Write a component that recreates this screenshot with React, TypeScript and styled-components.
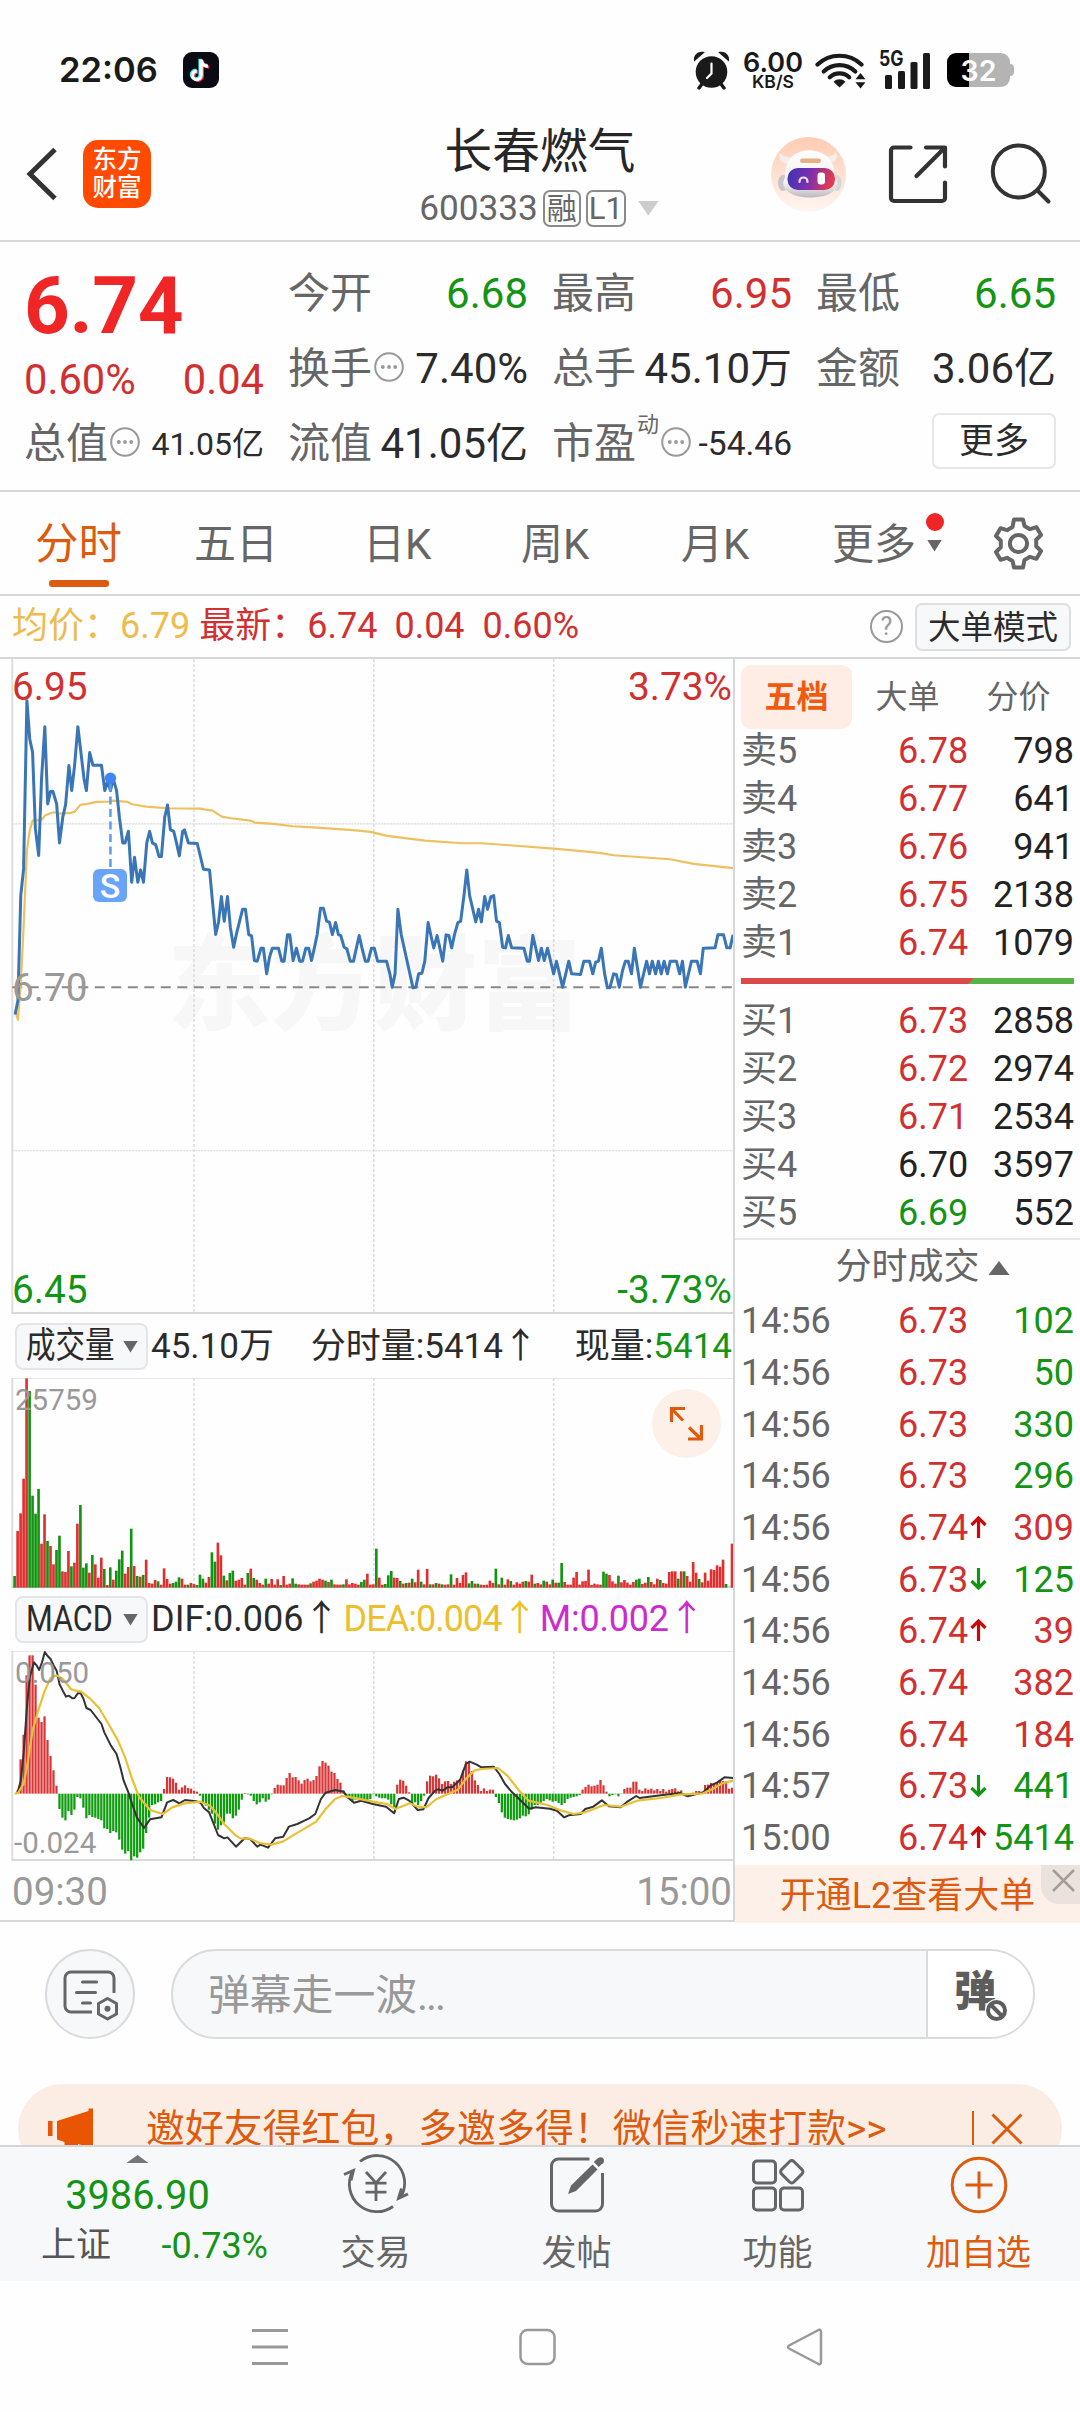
import React from "react";
import styled, { createGlobalStyle } from "styled-components";

const C = {
  red: "#d23030",
  green: "#149414",
  dark: "#2b2b2b",
  grey: "#666",
  pale: "#999",
  orange: "#dd5b0f",
  gold: "#edbb4e",
  line: "#d6d7d9",
  panel: "#f7f8fa",
};

const Global = createGlobalStyle`
  * { box-sizing: border-box; }
  body { margin: 0; background: #fff; }
  svg { display: block; flex: none; }
`;

const Screen = styled.main`
  width: 1080px;
  height: 2412px;
  display: flex;
  flex-direction: column;
  overflow: hidden;
  background: #fefefe;
  color: ${C.dark};
  font-family: Roboto, "Noto Sans CJK SC", sans-serif;
  line-height: 1.2;
  white-space: nowrap;
  & > * { flex-shrink: 0; }
`;

/* ---------- status bar ---------- */

const StatusBar = styled.div`
  height: 120px;
  padding: 0 67px 0 59px;
  display: flex;
  align-items: center;
  justify-content: space-between;
  font-family: Inter, Roboto, sans-serif;
  font-weight: 600;
  color: #1a1a1a;
`;
const StatusSide = styled.div`
  display: flex;
  align-items: center;
  padding-top: 20px;
`;
const Clock = styled.span`
  font-size: 34.5px;
  line-height: 36px;
  margin-right: 25px;
`;
const NetSpeed = styled.div`
  width: 62px;
  margin: 0 11px 0 11px;
  display: flex;
  flex-direction: column;
  align-items: center;
`;
const SpeedValue = styled.span`
  font-size: 27px;
  line-height: 23px;
`;
const SpeedUnit = styled.span`
  font-size: 17.5px;
  line-height: 16px;
`;
const Signal = styled.div`
  width: 54px;
  height: 38px;
  margin-left: 12px;
  position: relative;
`;
const SignalKind = styled.span`
  position: absolute;
  left: 0;
  top: -2px;
  font-size: 21px;
  font-weight: 700;
  line-height: 20px;
  transform: scaleX(0.84);
  transform-origin: left;
`;
const Battery = styled.div`
  width: 63px;
  height: 34px;
  margin: 0 3px 0 14px;
  position: relative;
  border-radius: 9px;
  background: linear-gradient(to right, #000 22px, #b4b4b4 22px);
  color: #fff;
  font-size: 28.5px;
  line-height: 35px;
  text-align: center;
  &::after {
    content: "";
    position: absolute;
    left: 63px;
    top: 11px;
    width: 4px;
    height: 12px;
    border-radius: 0 4px 4px 0;
    background: #b4b4b4;
  }
`;

/* ---------- title bar ---------- */

const Header = styled.header`
  height: 122px;
  display: grid;
  grid-template-columns: 1fr 260px 1fr;
  border-bottom: 2px solid ${C.line};
`;
const HeaderSide = styled.div<{ $end?: boolean }>`
  display: flex;
  align-items: center;
  justify-content: ${(p) => (p.$end ? "flex-end" : "flex-start")};
  padding: ${(p) => (p.$end ? "0 28px 12px 0" : "0 0 13px 24px")};
  gap: ${(p) => (p.$end ? "42px" : "23px")};
`;
const AppLogo = styled.div`
  width: 68px;
  height: 68px;
  border-radius: 15px;
  background: #ff4a00;
  color: #fff;
  font-weight: 500;
  font-size: 24.5px;
  line-height: 28px;
  padding-top: 6px;
  text-align: center;
`;
const HeaderTitle = styled.div`
  display: flex;
  flex-direction: column;
  align-items: center;
`;
const StockName = styled.div`
  font-size: 47.7px;
  line-height: 64px;
  color: #262626;
`;
const StockCode = styled.div`
  display: flex;
  align-items: center;
  height: 40px;
  margin-top: 4px;
  margin-left: -2px;
  color: ${C.grey};
  font-size: 35.2px;
`;
const Badge = styled.span<{ $w: number; $size: number }>`
  width: ${(p) => p.$w}px;
  height: 37px;
  margin-left: 5px;
  border: 2px solid #8a8a8a;
  border-radius: 7px;
  font-size: ${(p) => p.$size}px;
  line-height: 34px;
  display: flex;
  justify-content: center;
`;
const Caret = styled.i<{ $w: number; $h: number; $color: string; $up?: boolean; $ml?: number }>`
  display: block;
  flex: none;
  width: ${(p) => p.$w}px;
  height: ${(p) => p.$h}px;
  margin-left: ${(p) => p.$ml ?? 0}px;
  background: ${(p) => p.$color};
  clip-path: ${(p) => (p.$up ? "polygon(50% 0, 100% 100%, 0 100%)" : "polygon(0 0, 100% 0, 50% 100%)")};
`;

/* ---------- quote summary ---------- */

const Quote = styled.section`
  height: 250px;
  padding: 14px 24px 0 24px;
  display: grid;
  grid-template-columns: repeat(4, 240px);
  column-gap: 24px;
  grid-template-rows: repeat(3, 75px);
  border-bottom: 2px solid ${C.line};
`;
const QuoteCell = styled.div`
  display: flex;
  align-items: center;
  height: 75px;
  min-width: 0;
`;
const BigPrice = styled.div`
  font-size: 80px;
  line-height: 98px;
  margin-top: 24px;
  font-weight: 700;
  letter-spacing: -0.4px;
  color: #f02626;
`;
const Change = styled.div`
  display: flex;
  justify-content: space-between;
  align-items: center;
  padding-top: 23px;
  color: ${C.red};
  font-size: 41.7px;
`;
const Label = styled.span`
  color: ${C.grey};
  font-size: 42px;
  line-height: 50px;
`;
const Value = styled.span<{ $color?: string; $size?: number }>`
  margin-left: auto;
  color: ${(p) => p.$color ?? C.dark};
  font-size: ${(p) => p.$size ?? 42}px;
  line-height: 50px;
`;
const Sup = styled.sup`
  align-self: flex-start;
  padding-top: 7px;
  margin-left: 1px;
  font-size: 22px;
  line-height: 24px;
  color: ${C.grey};
  vertical-align: baseline;
`;
const MoreButton = styled.button`
  margin-left: auto;
  width: 124px;
  height: 56px;
  margin-top: -5px;
  border: 2px solid #e6e7e9;
  border-radius: 7px;
  background: #fff;
  color: ${C.dark};
  font: 35px/51px Roboto, "Noto Sans CJK SC", sans-serif;
  padding: 0;
`;

/* ---------- period tabs ---------- */

const Tabs = styled.nav`
  height: 104px;
  padding-left: 35px;
  display: grid;
  grid-template-columns: 159px 169px 158px 160px 151px 160px auto;
  align-items: center;
  justify-items: start;
  border-bottom: 2px solid ${C.line};
`;
const Tab = styled.div<{ $active?: boolean }>`
  position: relative;
  display: flex;
  align-items: center;
  height: 102px;
  font-size: ${(p) => (p.$active ? 43.5 : 42)}px;
  color: ${(p) => (p.$active ? C.orange : C.grey)};
  padding-top: 5px;
  &::after {
    content: "";
    display: ${(p) => (p.$active ? "block" : "none")};
    position: absolute;
    left: 14px;
    bottom: 7px;
    width: 60px;
    height: 7px;
    border-radius: 3px;
    background: ${C.orange};
  }
`;
const RedDot = styled.i`
  position: absolute;
  right: -2px;
  top: 21px;
  width: 18px;
  height: 18px;
  border-radius: 50%;
  background: #f02626;
`;

/* ---------- info line ---------- */

const InfoLine = styled.div`
  height: 63px;
  padding: 0 9px 0 12px;
  display: flex;
  align-items: center;
  border-bottom: 2px solid ${C.line};
  font-size: 36px;
`;
const InfoText = styled.span<{ $color: string; $ml?: number }>`
  color: ${(p) => p.$color};
  margin-left: ${(p) => p.$ml ?? 0}px;
`;
const HelpMark = styled.span`
  width: 33px;
  height: 33px;
  margin-left: auto;
  border: 2px solid ${C.pale};
  border-radius: 50%;
  color: ${C.pale};
  font-size: 25px;
  line-height: 29px;
  text-align: center;
`;
const ModeButton = styled.div`
  width: 156px;
  height: 48px;
  margin-left: 12px;
  border: 2px solid #dcdee2;
  border-radius: 7px;
  background: ${C.panel};
  color: ${C.dark};
  font-size: 32.5px;
  line-height: 46px;
  text-align: center;
`;

/* ---------- chart column ---------- */

const Market = styled.section`
  height: 1263px;
  display: flex;
  border-bottom: 2px solid ${C.line};
`;
const ChartColumn = styled.div`
  width: 735px;
  border-right: 2px solid ${C.line};
`;
const Plot = styled.div<{ $h: number }>`
  position: relative;
  height: ${(p) => p.$h}px;
`;
const PlotLabel = styled.span<{ $top: number; $left?: number; $right?: number; $color?: string; $size?: number }>`
  position: absolute;
  top: ${(p) => p.$top - 20}px;
  ${(p) => (p.$right !== undefined ? `right: ${p.$right}px;` : `left: ${p.$left ?? 12}px;`)}
  color: ${(p) => p.$color ?? C.pale};
  font-size: ${(p) => p.$size ?? 38.8}px;
  line-height: 40px;
`;
const Watermark = styled.div`
  position: absolute;
  left: 167px;
  top: 268px;
  font-size: 103.500px;
  line-height: 120px;
  font-weight: 900;
  color: #f7f7f7;
`;
const SellMark = styled.span`
  position: absolute;
  left: 93px;
  top: 210px;
  width: 34px;
  height: 33px;
  border-radius: 6px;
  background: #68a4fa;
  color: #fff;
  font-size: 34px;
  font-weight: 500;
  line-height: 34px;
  text-align: center;
`;
const ExpandButton = styled.div`
  position: absolute;
  left: 652px;
  top: 11px;
  width: 69px;
  height: 69px;
  border-radius: 50%;
  background: #fdf0e8;
`;
const IndicatorRow = styled.div`
  height: 63px;
  padding: 0 1px 0 15px;
  display: flex;
  align-items: center;
  font-size: 35px;
`;
const Picker = styled.div`
  width: 133px;
  height: 47px;
  margin-right: 3px;
  border: 2px solid #e3e5e8;
  border-radius: 8px;
  background: ${C.panel};
  display: flex;
  align-items: center;
  padding-left: 9px;
`;
const PickerName = styled.span<{ $squeeze: number }>`
  width: 88px;
  span {
    display: inline-block;
    font-size: 36px;
    transform: scaleX(${(p) => p.$squeeze});
    transform-origin: left;
  }
`;
const Reading = styled.span<{ $color?: string; $ml?: number; $size?: number; $track?: number }>`
  color: ${(p) => p.$color ?? C.dark};
  margin-left: ${(p) => p.$ml ?? 0}px;
  font-size: ${(p) => p.$size ?? 35}px;
  letter-spacing: ${(p) => p.$track ?? 0}px;
`;
const Push = styled.span`
  margin-left: auto;
`;
const TimeAxis = styled.div`
  height: 60px;
  padding: 2px 1px 0 12px;
  display: flex;
  align-items: center;
  justify-content: space-between;
  color: ${C.pale};
  font-size: 38.5px;
`;

/* ---------- order book ---------- */

const Book = styled.aside`
  flex: 1;
  display: flex;
  flex-direction: column;
  font-size: 36px;
  & > * { flex-shrink: 0; }
`;
const BookTabs = styled.div`
  height: 69px;
  padding: 6px 6px 3px;
  display: grid;
  grid-template-columns: repeat(3, 111px);
`;
const BookTab = styled.div<{ $active?: boolean }>`
  border-radius: 10px;
  background: ${(p) => (p.$active ? "#fdede4" : "transparent")};
  color: ${(p) => (p.$active ? "#f05a10" : C.grey)};
  font-weight: ${(p) => (p.$active ? 700 : 400)};
  font-size: 32px;
  line-height: 64px;
  text-align: center;
`;
const BookRow = styled.div<{ $h: number }>`
  height: ${(p) => p.$h}px;
  padding: 0 6px 0 6px;
  display: grid;
  grid-template-columns: 157px 92px 1fr;
  align-items: center;
`;
const BookCell = styled.span<{ $color: string; $right?: boolean }>`
  display: flex;
  align-items: center;
  justify-content: ${(p) => (p.$right ? "flex-end" : "flex-start")};
  color: ${(p) => p.$color};
`;
const RatioBar = styled.div`
  height: 6px;
  margin: 10px 6px 14px;
  background: #58b347;
  &::before {
    content: "";
    display: block;
    width: 233px;
    height: 6px;
    background: #db4a4a;
    clip-path: polygon(0 0, 100% 0, calc(100% - 6px) 100%, 0 100%);
  }
`;
const TradesTitle = styled.div`
  height: 58px;
  width: 345px;
  border-top: 2px solid #e6e6e8;
  display: flex;
  align-items: center;
  justify-content: center;
  padding-left: 30px;
  color: ${C.grey};
`;
const Promo = styled.div`
  position: relative;
  height: 58px;
  background: #fcf0e9;
  color: ${C.orange};
  line-height: 62px;
  text-align: center;
`;
const PromoClose = styled.div`
  position: absolute;
  right: 0;
  top: 0;
  width: 39px;
  height: 39px;
  border-radius: 0 0 0 18px;
  background: #ece2dc;
`;

/* ---------- comment row and banner ---------- */

const CommentRow = styled.div`
  height: 162px;
  padding: 27px 45px 0;
  display: flex;
  gap: 36px;
`;
const RoundButton = styled.div`
  width: 90px;
  height: 90px;
  border: 2px solid #d9dbde;
  border-radius: 50%;
  background: ${C.panel};
  display: grid;
  place-items: center;
  padding: 3px 0 0 2px;
`;
const CommentBox = styled.div`
  flex: 1;
  height: 90px;
  border: 2px solid #d9dbde;
  border-radius: 45px;
  overflow: hidden;
  background: ${C.panel};
  display: flex;
  color: ${C.pale};
  font-size: 41.8px;
  line-height: 89px;
  padding-left: 35px;
`;
const Dots = styled.span`
  letter-spacing: -2px;
`;
const BarrageToggle = styled.div`
  position: relative;
  width: 107px;
  margin-left: auto;
  border-left: 2px solid #d9dbde;
  background: #fff;
  color: #5d5d5d;
  font-weight: 900;
  font-size: 42px;
  line-height: 82px;
  padding-left: 26px;
`;
const ToggleOff = styled.div`
  position: absolute;
  left: 57px;
  top: 48px;
  border-radius: 50%;
  background: #fff;
`;
const BannerClip = styled.div`
  height: 61px;
  padding: 0 18px;
  overflow: hidden;
`;
const Banner = styled.div`
  height: 90px;
  border-radius: 45px;
  background: #fcede4;
  display: flex;
  align-items: center;
  color: ${C.orange};
  font-size: 38.9px;
  padding: 0 39px 0 30px;
`;
const BannerText = styled.span`
  margin-left: 53px;
  line-height: 46px;
`;
const BannerRule = styled.i`
  width: 2px;
  height: 36px;
  margin: 0 17px 0 auto;
  background: ${C.orange};
`;

/* ---------- bottom bars ---------- */

const BottomBar = styled.footer`
  height: 136px;
  border-top: 2px solid #d3d5d8;
  background: ${C.panel};
  display: grid;
  grid-template-columns: 275px repeat(4, 201px);
`;
const IndexBox = styled.div`
  padding-top: 8px;
  display: flex;
  flex-direction: column;
  align-items: center;
  color: ${C.green};
`;
const IndexValue = styled.div`
  font-size: 39.8px;
  line-height: 48px;
  margin-top: 9px;
`;
const IndexRow = styled.div`
  width: 275px;
  padding: 0 7px 0 41px;
  margin-top: 1px;
  display: flex;
  justify-content: space-between;
  font-size: 36px;
  line-height: 50px;
`;
const IndexName = styled.span`
  font-size: 35px;
  color: #555;
`;
const Action = styled.div<{ $accent?: boolean }>`
  display: flex;
  flex-direction: column;
  align-items: center;
  padding-top: 7px;
  font-size: 35px;
  line-height: 50px;
  color: ${(p) => (p.$accent ? C.orange : C.grey)};
  gap: 13px;
`;
const SystemNav = styled.div`
  flex: 1;
  display: flex;
  align-items: center;
  padding: 0 256px 0 250px;
  justify-content: space-between;
`;

/* ---------- data ---------- */

const PRICE_LINE =
  "32,1067 38,1025 44,710 50,630 57,125 63,240 69,280 75,510 82,590 88,360 95,203 101,435 107,398 112,397 120,435 126,552 133,475 139,437 146,320 152,395 158,320 165,203 171,275 178,360 183,395 190,281 197,319 215,319 222,395 228,365 234,395 240,360 247,395 253,475 260,552 265,552 272,517 279,670 285,595 292,670 298,633 304,670 311,552 317,517 323,552 330,558 337,593 342,593 349,475 355,438 361,513 368,517 374,552 380,591 387,517 391,513 399,552 418,554 425,595 431,631 444,633 450,725 457,827 463,790 469,713 475,787 482,713 488,805 495,865 501,825 514,751 520,751 527,827 533,831 539,905 545,907 553,868 558,868 565,945 571,895 577,868 590,868 597,907 602,907 609,828 614,828 621,905 628,868 635,907 641,907 648,868 654,868 660,905 666,868 672,827 679,748 685,748 692,787 698,790 704,827 711,791 717,827 722,830 729,865 735,870 742,907 749,907 755,868 761,830 767,868 774,907 780,907 787,868 793,868 800,907 819,907 826,945 831,985 837,945 843,751 850,827 875,987 881,985 887,945 894,943 900,907 907,791 913,830 919,867 926,830 932,868 938,907 945,828 951,830 957,867 963,827 970,791 976,787 983,710 989,633 995,710 1008,789 1014,751 1020,789 1027,713 1033,751 1040,713 1046,710 1052,787 1058,791 1065,865 1071,867 1077,830 1084,867 1110,868 1117,907 1122,907 1129,830 1141,905 1147,868 1153,905 1160,868 1173,945 1179,907 1192,985 1205,907 1211,945 1230,947 1237,907 1249,907 1256,945 1262,910 1268,907 1274,868 1281,945 1287,987 1292,987 1300,945 1306,947 1312,985 1319,935 1325,907 1331,907 1338,945 1344,868 1357,985 1370,907 1376,945 1382,907 1389,945 1395,907 1401,945 1407,907 1414,945 1420,907 1433,907 1440,945 1446,907 1452,985 1465,907 1477,907 1484,945 1490,868 1515,867 1521,828 1533,828 1540,867 1547,867 1553,828";
const AVERAGE_LINE =
  "32,1055 38,1083 44,975 50,805 57,575 63,515 69,485 88,483 95,470 107,463 115,460 125,464 150,462 158,459 170,438 185,435 205,429 230,428 240,425 270,429 280,436 310,443 355,448 425,449 435,452 450,455 470,473 490,478 530,485 540,491 580,495 620,502 680,507 760,515 785,519 820,531 900,545 980,553 1020,553 1080,559 1180,570 1270,582 1300,589 1420,601 1470,615 1553,628";
const DIF_LINE =
  "37,426 44,389 50,309 57,169 63,79 72,34 78,44 83,57 89,34 95,3 101,15 107,24 114,44 120,59 126,99 133,119 140,137 146,134 153,142 158,141 165,127 171,127 177,144 183,171 192,177 215,219 221,244 235,284 247,309 255,349 262,389 272,424 280,459 290,499 305,531 318,505 342,499 354,454 367,447 380,457 392,447 415,451 425,455 432,471 443,484 450,509 462,552 475,562 482,559 500,587 518,562 530,564 545,587 552,581 568,590 583,562 600,557 612,527 630,519 645,509 655,502 668,489 680,444 690,425 710,417 728,422 735,437 750,455 765,449 790,459 818,467 835,487 845,444 855,440 867,449 885,477 897,475 908,441 922,419 928,415 938,419 948,409 958,409 975,386 987,339 995,332 1010,341 1020,349 1046,347 1058,369 1070,399 1085,424 1100,444 1121,473 1135,469 1165,473 1180,479 1195,499 1205,493 1230,489 1240,474 1257,467 1275,448 1290,466 1315,469 1330,451 1348,435 1355,441 1400,433 1440,426 1457,436 1490,424 1505,404 1520,394 1535,379 1553,381";
const DEA_LINE =
  "31,428 38,426 50,399 57,349 69,239 82,174 95,119 107,81 120,73 133,84 150,114 160,119 172,122 190,142 210,171 230,219 250,269 265,319 280,384 295,439 318,477 345,489 365,469 390,457 425,452 445,464 460,489 475,519 500,554 510,562 530,563 550,576 575,581 600,571 620,554 670,512 690,474 710,444 725,435 745,439 790,452 820,459 838,474 855,464 868,457 885,467 903,469 925,444 970,416 990,379 1005,359 1020,354 1055,351 1075,374 1100,419 1120,449 1160,462 1190,479 1215,489 1240,484 1280,462 1315,467 1350,449 1400,441 1440,431 1490,427 1510,414 1530,397 1553,389";

/* one entry per trading minute; negative = falling minute */
const VOLUME: number[] = [
  -35, 170, 223, 327, 628, -590, -276, -222, -296, 132, 220, -140, 125, 70, -113, -156, 49, 47, 110, -64,
  75, 192, -248, -60, -73, 45, -98, 70, 30, 90, -56, 8, -61, 24, -51, -85, -111, 42, 62, -177,
  65, -35, 33, -38, 84, 14, 12, 23, -19, 9, 58, 26, 12, -14, -18, -31, 27, 9, -9, 14,
  11, -8, -39, -27, 15, 32, -106, -78, 135, 97, -36, 22, -44, -51, 21, 24, 29, 9, -44, 57,
  -29, 24, 14, 9, -27, 12, 26, 9, 25, -8, 35, 9, 12, -28, -12, 10, 9, 9, 9, -13,
  18, 21, 27, 24, -21, 17, -24, 10, 9, 9, -10, 25, 10, 14, 12, 9, -17, -24, 42, 9,
  10, -117, 30, 9, -11, -37, -50, 30, 29, -20, 12, -14, 15, -27, 16, 54, -18, 10, 56, -10,
  10, -14, 12, -10, 9, 10, -40, 9, 29, 14, 38, 46, -13, -20, 12, -12, 9, 8, 9, 21,
  14, -57, 10, -30, 9, 25, -20, 9, 16, 12, 18, -20, 18, 39, -12, 14, 10, -21, 18, 10,
  -24, 15, -15, -74, 17, 9, 9, 30, 47, 9, 19, 20, 54, 8, 12, 10, 9, -48, -42, 38,
  19, 12, -36, 16, 23, 15, 9, 17, -24, -27, 11, 15, -32, 17, 10, 27, -23, 14, 12, 47,
  49, 49, -27, 49, -49, 35, 18, 77, 45, -26, 16, 45, 21, 55, 53, 67, 63, 84, -11, 0,
  132,
];

const HISTOGRAM: number[] = [
  0, 10, 103, 177, 355, 415, 415, 327, 228, 215, 232, 161, 113, 70, 24, -46, -72, -80, -52, -64,
  -48, -10, -14, -42, -74, -64, -70, -72, -76, -80, -104, -106, -118, -112, -116, -138, -168, -180, -172, -200,
  -188, -192, -176, -165, -118, -72, -34, -32, -26, -22, 14, 50, 49, 45, 33, 12, 19, 25, 17, 15,
  9, 6, -6, -26, -36, -48, -60, -90, -108, -95, -86, -60, -60, -74, -66, -48, -18, 2, -2, -6,
  -22, -32, -26, -14, -24, -18, -2, 17, 27, 25, 25, 47, 62, 49, 50, 40, 30, 41, 45, 37,
  41, 53, 82, 98, 93, 84, 66, 62, 44, 33, 10, -8, -16, -24, -18, -16, -18, -22, -26, -16,
  -2, -8, -12, -14, -14, -18, -32, -40, 27, 42, 39, 24, 4, -32, -26, -34, -22, -6, 37, 54,
  52, 57, 46, 29, 37, 38, 29, 36, 40, 44, 70, 97, 93, 68, 40, 26, 8, 16, 8, 12,
  12, -10, -28, -56, -72, -76, -78, -80, -78, -74, -66, -68, -62, -48, -34, -34, -30, -22, -16, -20,
  -24, -22, -28, -34, -28, -16, -12, -10, -8, -4, 12, 20, 27, 22, 24, 27, 41, 25, 6, -8,
  -4, -2, -8, -1, 14, 18, 18, 36, 36, 12, 8, 16, 12, 15, 10, 14, 8, 14, 6, 12,
  14, 16, 7, 10, 2, -2, -4, 3, 8, 8, 4, 26, 27, 32, 31, 34, 40, 38, 38, 15,
  18,
];

const minuteX = (i: number) => 31 + i * 6.333;

const SELL: [string, string, string][] = [
  ["卖5", "6.78", "798"],
  ["卖4", "6.77", "641"],
  ["卖3", "6.76", "941"],
  ["卖2", "6.75", "2138"],
  ["卖1", "6.74", "1079"],
];
const BUY: [string, string, string, string][] = [
  ["买1", "6.73", "2858", C.red],
  ["买2", "6.72", "2974", C.red],
  ["买3", "6.71", "2534", C.red],
  ["买4", "6.70", "3597", "#222"],
  ["买5", "6.69", "552", C.green],
];
type Trade = [time: string, price: string, volume: string, rise: boolean, arrow?: "up" | "down"];
const TRADES: Trade[] = [
  ["14:56", "6.73", "102", false],
  ["14:56", "6.73", "50", false],
  ["14:56", "6.73", "330", false],
  ["14:56", "6.73", "296", false],
  ["14:56", "6.74", "309", true, "up"],
  ["14:56", "6.73", "125", false, "down"],
  ["14:56", "6.74", "39", true, "up"],
  ["14:56", "6.74", "382", true],
  ["14:56", "6.74", "184", true],
  ["14:57", "6.73", "441", false, "down"],
  ["15:00", "6.74", "5414", false, "up"],
];

/* ---------- icons ---------- */

const DotsRing = styled.svg`
  margin: -4px 0 0 2px;
`;
const MoreDots = () => (
  <DotsRing width="30" height="30" viewBox="0 0 30 30">
    <circle cx="15" cy="15" r="13.8" fill="none" stroke="#999" strokeWidth="2" />
    <circle cx="8.8" cy="15" r="1.9" fill="#999" />
    <circle cx="15" cy="15" r="1.9" fill="#999" />
    <circle cx="21.2" cy="15" r="1.9" fill="#999" />
  </DotsRing>
);

const NOTE = "M17.6 7.500v15.800a4.300 4.300 0 1 1-4.300-4.300M17.6 8.500c.6 3.200 3.200 5.600 6.800 5.800";
const TikTok = () => (
  <svg width="36" height="36" viewBox="0 0 36 36">
    <rect width="36" height="36" rx="9" fill="#0b0b14" />
    <g fill="none" strokeWidth="3.400" transform="translate(.5 0)">
      <path d={NOTE} stroke="#25f4ee" transform="translate(-1 -.8)" />
      <path d={NOTE} stroke="#fe2c55" transform="translate(1.2 .8)" />
      <path d={NOTE} stroke="#fff" />
    </g>
  </svg>
);

const Alarm = () => (
  <svg width="38" height="40" viewBox="0 0 38 40">
    <g fill="#1a1a1a">
      <circle cx="18.5" cy="22" r="15.8" />
      <path d="M1.2 11.5C-.4 5 5.500 .2 11.800 2.300L1.200 11.500ZM35.800 11.500C37.400 5 31.500 .2 25.200 2.300L35.800 11.500Z" />
    </g>
    <path d="M9 34l-3 4M28 34l3 4" stroke="#1a1a1a" strokeWidth="3.400" strokeLinecap="round" />
    <path d="M18.500 13.500v10l-4.500 4.500" fill="none" stroke="#fff" strokeWidth="2.200" strokeLinecap="round" />
  </svg>
);

const Wifi = () => (
  <svg width="52" height="38" viewBox="0 0 52 38">
    <g fill="none" stroke="#1a1a1a" strokeWidth="4.200" strokeLinecap="round">
      <path d="M2.500 13.500a32 32 0 0 1 44 0" />
      <path d="M8.700 20.500a23 23 0 0 1 31.600 0" />
      <path d="M14.800 26.300a14 14 0 0 1 19.400 0" />
    </g>
    <path d="M24.500 36.500l-6-5.800a8.500 8.500 0 0 1 12 0z" fill="#1a1a1a" />
    <path d="M45.500 22l5 6.200h-10zM45.500 37.500l5-6.200h-10z" fill="#1a1a1a" />
  </svg>
);

const Robot = () => (
  <svg width="75" height="75" viewBox="0 0 75 75">
    <defs>
      <linearGradient id="halo" x1="0" y1="0" x2="0" y2="1">
        <stop offset="0" stopColor="#ffcbb2" />
        <stop offset="1" stopColor="#fff6f1" />
      </linearGradient>
      <linearGradient id="visor" x1="0" y1="0" x2="1" y2="0.150">
        <stop offset="0" stopColor="#3a35b5" />
        <stop offset="0.500" stopColor="#7a2fb0" />
        <stop offset="1" stopColor="#e23a50" />
      </linearGradient>
      <linearGradient id="shell" x1="0" y1="0" x2="0" y2="1">
        <stop offset="0" stopColor="#fff" />
        <stop offset="0.700" stopColor="#f1f0f2" />
        <stop offset="1" stopColor="#bdbabf" />
      </linearGradient>
    </defs>
    <circle cx="37.500" cy="37.500" r="37.500" fill="url(#halo)" />
    <ellipse cx="12" cy="46" rx="5" ry="8" fill="#c9c5c9" />
    <ellipse cx="66" cy="46" rx="4.500" ry="8" fill="#d9d5d9" />
    <path d="M18 27C10 27 7 21 9 16c3 4 7 4 13 5zM58 27c7-2 9-7 7-12-2 4-6 4.500-12 5z" fill="#f4efee" />
    <path d="M14 40c0-16 8-26.500 24-26.500S63.500 23 64 39c3 6 2.500 11-1 14.500-5 5-14 7-24 7s-19-2.500-23.500-7C12 50 11 46 14 40z" fill="url(#shell)" />
    <rect x="29" y="21.500" width="21" height="4.500" rx="2.200" fill="#e9b084" />
    <rect x="16.500" y="31" width="47.500" height="22" rx="10.500" fill="url(#visor)" />
    <path d="M28.500 45c0-6 8-6 8 0" fill="none" stroke="#e8e2ff" strokeWidth="2.200" strokeLinecap="round" />
    <rect x="46.500" y="35.500" width="7.500" height="12" rx="3" fill="#fff" />
  </svg>
);

const Share = () => (
  <svg width="60" height="60" viewBox="0 0 60 60" fill="none" stroke="#333" strokeWidth="4.200" strokeLinecap="round" strokeLinejoin="round">
    <path d="M22.500 3.500H6A3 3 0 0 0 3 6.500V54a3 3 0 0 0 3 3h48a3 3 0 0 0 3-3V38.500" />
    <path d="M38 3.500h19v19M56 4.500L28.500 32" />
  </svg>
);

const SearchIcon = () => (
  <svg width="62" height="62" viewBox="0 0 62 62" fill="none" stroke="#333" strokeWidth="4" strokeLinecap="round">
    <circle cx="28.800" cy="28.500" r="26" />
    <path d="M47.500 47.500L58.500 58.500" />
  </svg>
);

const Gear = () => (
  <svg width="53" height="53" viewBox="0 0 53 53" fill="none" stroke="#666" strokeWidth="4">
    <path
      strokeLinejoin="round"
      d="M22 2.500h9l1.500 6.500 5.500 3.200 6.500-2 4.500 7.800-4.800 4.700v6.600l4.800 4.700-4.500 7.800-6.500-2-5.500 3.200L31 50.500h-9l-1.500-6.500-5.500-3.200-6.500 2L4 35l4.800-4.700v-6.600L4 19l4.500-7.800 6.500 2 5.500-3.200z"
    />
    <circle cx="26.500" cy="26.500" r="8.600" />
  </svg>
);

const ArrowSvg = styled.svg`
  margin: -3px 0 0 2px;
`;
const Arrow = ({ dir }: { dir: "up" | "down" }) => (
  <ArrowSvg width="17" height="24" viewBox="0 0 17 24" fill="none" strokeWidth="3.200">
    {dir === "up" ? <path d="M8.500 23V3M1.500 10l7-7 7 7" stroke="#c80a0a" /> : <path d="M8.500 1v20M1.500 14l7 7 7-7" stroke="#149414" />}
  </ArrowSvg>
);

const Cross = ({ size, color, w }: { size: number; color: string; w: number }) => (
  <svg width={size} height={size} viewBox={`0 0 ${size} ${size}`} stroke={color} strokeWidth={w}>
    <path d={`M1.500 1.500L${size - 1.5} ${size - 1.5}M${size - 1.5} 1.500L1.500 ${size - 1.5}`} />
  </svg>
);

const NoteIcon = () => (
  <svg width="56" height="52" viewBox="0 0 56 52" fill="none" stroke="#666" strokeWidth="3" strokeLinecap="butt">
    <path d="M51 23V8a6 6 0 0 0-6-6H8a6 6 0 0 0-6 6v28a6 6 0 0 0 6 6h21" />
    <path d="M19.500 12h14M13.500 22.500h19M19.500 33h8" strokeLinecap="round" />
    <path d="M44.500 28.500l9 5v10.500l-9 5-9-5V33.500z" strokeLinejoin="round" />
    <circle cx="44.500" cy="38.700" r="3" fill="#666" stroke="none" />
  </svg>
);

const Horn = () => (
  <svg width="45" height="44" viewBox="0 0 45 44" fill="#ea5504">
    <rect x="0" y="14" width="4.500" height="15" />
    <path d="M9 14L40.500 4V1.500H45V40h-4.500L30 37v5H16.500v-7L9 32.500z" />
  </svg>
);

const TradeIcon = () => (
  <svg width="66" height="62" viewBox="0 0 66 62" fill="none" stroke="#666" strokeWidth="2.800">
    <path d="M17 7.500A27.500 27.500 0 0 1 57.500 43.500" />
    <path d="M50 52.500A27.500 27.500 0 0 1 9.500 17.500" />
    <path d="M1 20.500l9.500-4-2.500 10M65 40l-9.500 4.500 3-10" />
    <path d="M23 18l10 11 10-11M33 29v18M22.500 29.200h21M22.500 38.200h21" />
  </svg>
);

const PostIcon = () => (
  <svg width="56" height="62" viewBox="0 0 56 62" fill="none" stroke="#666" strokeWidth="3">
    <path d="M40.500 5H9.500a7 7 0 0 0-7 7v38a7 7 0 0 0 7 7h37a7 7 0 0 0 7-7V19" />
    <path d="M19 40l3-8.500L43.500 10.500l5 5L27 37z" fill="#666" stroke="none" />
    <path d="M47.300 10.500l3.500-3.500" strokeWidth="7" />
    <circle cx="51.500" cy="6.700" r="3.500" fill="#666" stroke="none" />
  </svg>
);

const FeatureIcon = () => (
  <svg width="54" height="62" viewBox="0 0 54 62" fill="none" stroke="#666" strokeWidth="3">
    <rect x="2.500" y="7" width="22" height="22" rx="3.500" />
    <rect x="2.500" y="34" width="22" height="22" rx="3.500" />
    <rect x="29.500" y="34" width="22" height="22" rx="3.500" />
    <rect x="32" y="9" width="17.500" height="17.500" rx="3" transform="rotate(45 40.750 17.750)" />
  </svg>
);

const AddIcon = () => (
  <svg width="60" height="62" viewBox="0 0 60 62" fill="none" stroke="#dd5b0f" strokeWidth="3">
    <circle cx="30" cy="31" r="26.800" />
    <path d="M30 17.500v27M16.500 31h27" />
  </svg>
);

/* ---------- plots ---------- */

const GRID_X = [411, 792, 1173];

const Frame = ({ h, rows = [] }: { h: number; rows?: number[] }) => (
  <g fill="none">
    {GRID_X.map((x) => (
      <path key={x} d={`M${x} 0V${h}`} stroke="#dcdcdc" strokeWidth="1.500" strokeDasharray="3 2" vectorEffect="non-scaling-stroke" />
    ))}
    {rows.map((y) => (
      <path key={y} d={`M26 ${y}H1553`} stroke="#d8d8d8" strokeWidth="1.200" strokeDasharray="2 1" vectorEffect="non-scaling-stroke" />
    ))}
    <path d={`M26 0V${h}`} stroke="#dedede" strokeWidth="2" vectorEffect="non-scaling-stroke" />
    <path d={`M25 ${h - 3}H1553`} stroke="#d8d8d8" strokeWidth="2" vectorEffect="non-scaling-stroke" />
  </g>
);

const Line = ({ points, color, w }: { points: string; color: string; w: number }) => (
  <polyline points={points} fill="none" stroke={color} strokeWidth={w} strokeLinejoin="round" vectorEffect="non-scaling-stroke" />
);

const PriceSvg = styled.svg`
  position: relative;
`;
const PricePlot = () => (
  <PriceSvg width="733" height="655" viewBox="0 0 1553 1966" preserveAspectRatio="none">
    <Frame h={1966} rows={[495, 1476]} />
    <path d="M26 985H1553" stroke="#888" strokeWidth="2" strokeDasharray="10 6.500" vectorEffect="non-scaling-stroke" />
    <Line points={AVERAGE_LINE} color="#edc060" w={2.2} />
    <Line points={PRICE_LINE} color="#3a76b6" w={3} />
    <ellipse cx="234" cy="358" rx="12" ry="17" fill="#3f86ee" />
    <path d="M234 375V630" stroke="#5b9bf0" strokeWidth="2.500" strokeDasharray="8 4.500" vectorEffect="non-scaling-stroke" />
  </PriceSvg>
);

const VolumePlot = () => (
  <svg width="733" height="210" viewBox="0 0 1553 630" preserveAspectRatio="none">
    <Frame h={630} />
    <path d="M25 1H1553" stroke="#dedede" strokeWidth="3" />
    {VOLUME.map((v, i) => (
      <rect key={i} x={minuteX(i) - 2.8} y={629 - Math.abs(v)} width="5.600" height={Math.abs(v)} fill={v > 0 ? "#e12f2f" : "#129412"} />
    ))}
  </svg>
);

const MacdPlot = () => (
  <svg width="733" height="210" viewBox="0 0 1553 630" preserveAspectRatio="none">
    <Frame h={630} />
    <path d="M25 1H1553" stroke="#dedede" strokeWidth="3" />
    {HISTOGRAM.map((v, i) => (
      <rect
        key={i}
        x={minuteX(i) - 2.4}
        y={v > 0 ? 428 - v : 428}
        width="4.800"
        height={Math.abs(v)}
        fill={v > 0 ? "#d83636" : "#0f9d0f"}
      />
    ))}
    <Line points={DIF_LINE} color="#333" w={2} />
    <Line points={DEA_LINE} color="#e8c033" w={2.2} />
  </svg>
);

export default function App() {
  return (
    <>
      <Global />
      <Screen>
        <StatusBar>
          <StatusSide>
            <Clock>22:06</Clock>
            <TikTok />
          </StatusSide>
          <StatusSide>
            <Alarm />
            <NetSpeed>
              <SpeedValue>6.00</SpeedValue>
              <SpeedUnit>KB/S</SpeedUnit>
            </NetSpeed>
            <Wifi />
            <Signal>
              <SignalKind>5G</SignalKind>
              <svg width="54" height="38" viewBox="0 0 54 38" fill="#1a1a1a">
                <rect x="6" y="24" width="7" height="14" rx="1.500" />
                <rect x="19" y="20" width="7" height="18" rx="1.500" />
                <rect x="31.500" y="11" width="7" height="27" rx="1.500" />
                <rect x="44" y="2" width="7" height="36" rx="1.500" />
              </svg>
            </Signal>
            <Battery>32</Battery>
          </StatusSide>
        </StatusBar>

        <Header>
          <HeaderSide>
            <svg width="36" height="56" viewBox="0 0 36 56" fill="none" stroke="#333" strokeWidth="5">
              <path d="M31 3.500L6 28l25 24.500" />
            </svg>
            <AppLogo>
              东方
              <br />
              财富
            </AppLogo>
          </HeaderSide>
          <HeaderTitle>
            <StockName>长春燃气</StockName>
            <StockCode>
              600333
              <Badge $w={38} $size={30}>融</Badge>
              <Badge $w={40} $size={31}>L1</Badge>
              <Caret $w={21} $h={15} $color="#ccc" $ml={12} />
            </StockCode>
          </HeaderTitle>
          <HeaderSide $end>
            <Robot />
            <Share />
            <SearchIcon />
          </HeaderSide>
        </Header>

        <Quote>
          <QuoteCell>
            <BigPrice>6.74</BigPrice>
          </QuoteCell>
          <QuoteCell>
            <Label>今开</Label>
            <Value $color={C.green}>6.68</Value>
          </QuoteCell>
          <QuoteCell>
            <Label>最高</Label>
            <Value $color={C.red}>6.95</Value>
          </QuoteCell>
          <QuoteCell>
            <Label>最低</Label>
            <Value $color={C.green}>6.65</Value>
          </QuoteCell>

          <Change>
            <span>0.60%</span>
            <span>0.04</span>
          </Change>
          <QuoteCell>
            <Label>换手</Label>
            <MoreDots />
            <Value>7.40%</Value>
          </QuoteCell>
          <QuoteCell>
            <Label>总手</Label>
            <Value>45.10万</Value>
          </QuoteCell>
          <QuoteCell>
            <Label>金额</Label>
            <Value>3.06亿</Value>
          </QuoteCell>

          <QuoteCell>
            <Label>总值</Label>
            <MoreDots />
            <Value $size={32}>41.05亿</Value>
          </QuoteCell>
          <QuoteCell>
            <Label>流值</Label>
            <Value>41.05亿</Value>
          </QuoteCell>
          <QuoteCell>
            <Label>市盈</Label>
            <Sup>动</Sup>
            <MoreDots />
            <Value $size={33.5}>-54.46</Value>
          </QuoteCell>
          <QuoteCell>
            <MoreButton>更多</MoreButton>
          </QuoteCell>
        </Quote>

        <Tabs>
          <Tab $active>分时</Tab>
          <Tab>五日</Tab>
          <Tab>日K</Tab>
          <Tab>周K</Tab>
          <Tab>月K</Tab>
          <Tab>
            更多
            <Caret $w={15} $h={12} $color="#666" $ml={11} />
            <RedDot />
          </Tab>
          <Gear />
        </Tabs>

        <InfoLine>
          <InfoText $color={C.gold}>均价：6.79</InfoText>
          <InfoText $color={C.red} $ml={9}>最新：6.74</InfoText>
          <InfoText $color={C.red} $ml={17}>0.04</InfoText>
          <InfoText $color={C.red} $ml={18}>0.60%</InfoText>
          <HelpMark>?</HelpMark>
          <ModeButton>大单模式</ModeButton>
        </InfoLine>

        <Market>
          <ChartColumn>
            <Plot $h={656}>
              <Watermark>东方财富</Watermark>
              <PricePlot />
              <PlotLabel $top={28} $color={C.red}>6.95</PlotLabel>
              <PlotLabel $top={28} $right={1} $color={C.red}>3.73%</PlotLabel>
              <PlotLabel $top={329}>6.70</PlotLabel>
              <PlotLabel $top={631} $color={C.green}>6.45</PlotLabel>
              <PlotLabel $top={631} $right={1} $color={C.green}>-3.73%</PlotLabel>
              <SellMark>S</SellMark>
            </Plot>
            <IndicatorRow>
              <Picker>
                <PickerName $squeeze={0.82}>
                  <span>成交量</span>
                </PickerName>
                <Caret $w={15} $h={12} $color="#666" $ml={9} />
              </Picker>
              <Reading>45.10万</Reading>
              <Push />
              <Reading>分时量:5414↑</Reading>
              <Push />
              <Reading>现量:</Reading>
              <Reading $color={C.green}>5414</Reading>
            </IndicatorRow>
            <Plot $h={210}>
              <VolumePlot />
              <PlotLabel $top={22} $left={15} $size={29.5}>25759</PlotLabel>
              <ExpandButton>
                <svg width="69" height="69" viewBox="0 0 69 69" fill="none" stroke="#dd5b0f" strokeWidth="3.200">
                  <path d="M19.500 33V19.500H33M20 20l11 11.500M37 38.500L49 50M49.500 36v14H36" />
                </svg>
              </ExpandButton>
            </Plot>
            <IndicatorRow>
              <Picker>
                <PickerName $squeeze={0.85}>
                  <span>MACD</span>
                </PickerName>
                <Caret $w={15} $h={12} $color="#666" $ml={9} />
              </Picker>
              <Reading $size={36}>DIF:0.006↑</Reading>
              <Reading $size={36} $ml={4} $track={-0.95} $color="#ecc02c">DEA:0.004↑</Reading>
              <Reading $size={36} $ml={3} $track={-0.2} $color="#cc2ccf">M:0.002↑</Reading>
            </IndicatorRow>
            <Plot $h={210}>
              <MacdPlot />
              <PlotLabel $top={22} $left={15} $size={29.5}>0.050</PlotLabel>
              <PlotLabel $top={192} $left={14} $size={29.5}>-0.024</PlotLabel>
            </Plot>
            <TimeAxis>
              <span>09:30</span>
              <span>15:00</span>
            </TimeAxis>
          </ChartColumn>

          <Book>
            <BookTabs>
              <BookTab $active>五档</BookTab>
              <BookTab>大单</BookTab>
              <BookTab>分价</BookTab>
            </BookTabs>
            {SELL.map(([name, price, vol]) => (
              <BookRow key={name} $h={48}>
                <BookCell $color={C.grey}>{name}</BookCell>
                <BookCell $color={C.red}>{price}</BookCell>
                <BookCell $color="#222" $right>{vol}</BookCell>
              </BookRow>
            ))}
            <RatioBar />
            {BUY.map(([name, price, vol, color]) => (
              <BookRow key={name} $h={48}>
                <BookCell $color={C.grey}>{name}</BookCell>
                <BookCell $color={color}>{price}</BookCell>
                <BookCell $color="#222" $right>{vol}</BookCell>
              </BookRow>
            ))}
            <TradesTitle>
              分时成交
              <Caret $w={21} $h={14} $color="#666" $up $ml={9} />
            </TradesTitle>
            {TRADES.map(([time, price, vol, rise, arrow], i) => (
              <BookRow key={i} $h={51.7}>
                <BookCell $color={C.grey}>{time}</BookCell>
                <BookCell $color={C.red}>
                  {price}
                  {arrow && <Arrow dir={arrow} />}
                </BookCell>
                <BookCell $color={rise ? C.red : C.green} $right>{vol}</BookCell>
              </BookRow>
            ))}
            <Promo>
              开通L2查看大单
              <PromoClose>
                <svg width="39" height="32" viewBox="0 0 39 32" stroke="#a39c98" strokeWidth="2.500">
                  <path d="M12 5l21 21M33 5L12 26" />
                </svg>
              </PromoClose>
            </Promo>
          </Book>
        </Market>

        <CommentRow>
          <RoundButton>
            <NoteIcon />
          </RoundButton>
          <CommentBox>
            <span>
              弹幕走一波<Dots>...</Dots>
            </span>
            <BarrageToggle>
              弹
              <ToggleOff>
                <svg width="23" height="23" viewBox="0 0 23 23" fill="none" stroke="#5d5d5d" strokeWidth="4">
                  <circle cx="11.500" cy="11.500" r="8.500" />
                  <path d="M6 6l11 11" />
                </svg>
              </ToggleOff>
            </BarrageToggle>
          </CommentBox>
        </CommentRow>

        <BannerClip>
          <Banner>
            <Horn />
            <BannerText>邀好友得红包，多邀多得！微信秒速打款&gt;&gt;</BannerText>
            <BannerRule />
            <Cross size={32} color="#dd5b0f" w={3} />
          </Banner>
        </BannerClip>

        <BottomBar>
          <IndexBox>
            <Caret $w={22} $h={8} $color="#76767a" $up />
            <IndexValue>3986.90</IndexValue>
            <IndexRow>
              <IndexName>上证</IndexName>
              <span>-0.73%</span>
            </IndexRow>
          </IndexBox>
          <Action>
            <TradeIcon />
            交易
          </Action>
          <Action>
            <PostIcon />
            发帖
          </Action>
          <Action>
            <FeatureIcon />
            功能
          </Action>
          <Action $accent>
            <AddIcon />
            加自选
          </Action>
        </BottomBar>

        <SystemNav>
          <svg width="40" height="40" viewBox="0 0 40 40" stroke="#999" strokeWidth="3">
            <path d="M2 3.500h36M2 20h36M2 36.500h36" />
          </svg>
          <svg width="40" height="40" viewBox="0 0 40 40" fill="none" stroke="#999" strokeWidth="2.500">
            <rect x="3.500" y="3" width="34" height="34" rx="7" />
          </svg>
          <svg width="40" height="40" viewBox="0 0 40 40" fill="none" stroke="#999" strokeWidth="2.500" strokeLinejoin="round">
            <path d="M33.500 3.500c2-1.500 3.500-.5 3.500 1.500v30c0 2-1.500 3-3.500 1.500L5 21.500c-1.500-1-1.500-2 0-3z" />
          </svg>
        </SystemNav>
      </Screen>
    </>
  );
}
